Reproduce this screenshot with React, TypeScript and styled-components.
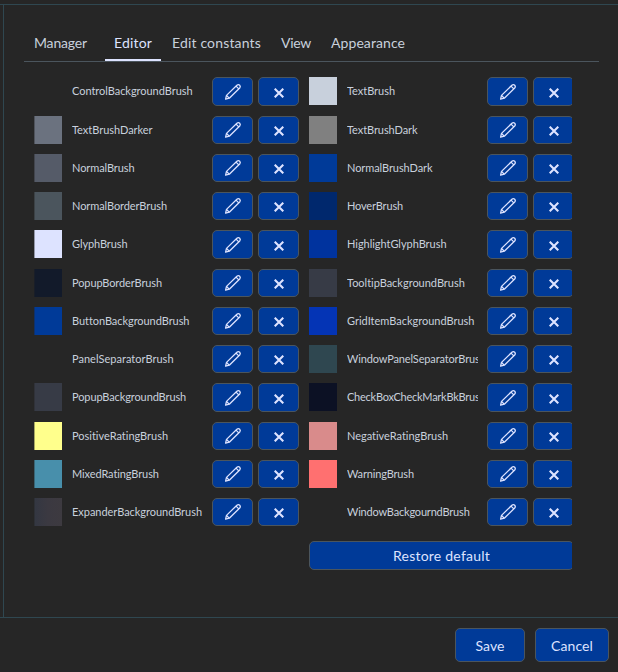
import React from 'react';
import styled, { createGlobalStyle } from 'styled-components';

const color = {
  page: '#262626',
  separator: '#2f4750',
  border: '#4b555d',
  text: '#c8d0dc',
  bright: '#dde3ff',
  button: '#003a98',
};

const GlobalStyle = createGlobalStyle`
  * { box-sizing: border-box; }
  body {
    margin: 0;
    background: ${color.page};
    color: ${color.text};
    font-family: Lato, "Open Sans", sans-serif;
    overflow: hidden;
  }
`;

const Window = styled.div`
  display: flex;
  flex-direction: column;
  width: 618px;
  height: 672px;
  padding-top: 4px;
`;

const Content = styled.main`
  flex: 1;
  margin-left: 3px;
  border-left: 1px solid ${color.separator};
  padding: 24px 19px 0 20px;
`;

const ContentFrame = styled.div`
  display: flex;
  height: 614px;
  border-top: 1px solid ${color.separator};
  border-bottom: 1px solid ${color.separator};
`;

const TabBar = styled.nav`
  display: flex;
  height: 33px;
  border-bottom: 1px solid ${color.border};
`;

const Tab = styled.button<{ $width: number; $spacing: number; $inset?: number; $active?: boolean }>`
  width: ${(p) => p.$width}px;
  height: 32px;
  padding: 0 0 3px ${(p) => p.$inset ?? 10}px;
  border: 0;
  border-bottom: 2px solid ${(p) => (p.$active ? color.bright : 'transparent')};
  background: none;
  color: ${(p) => (p.$active ? color.bright : color.text)};
  font: 14px/27px Lato, sans-serif;
  letter-spacing: ${(p) => p.$spacing}px;
  text-align: left;
  white-space: nowrap;
`;

const BrushGrid = styled.div`
  display: grid;
  grid-template-columns: 265px 263px;
  grid-template-rows: 39px 38px 38px 38px 39px 38px 38px 38px 39px 38px 38px 38px;
  column-gap: 10px;
  width: 538px;
  margin: 15px 0 0 10px;
`;

const BrushRow = styled.div`
  display: flex;
  align-items: flex-start;
  overflow: hidden;
`;

const Swatch = styled.div<{ $fill: string; $soft: boolean }>`
  flex: none;
  width: 28px;
  height: 28px;
  background: ${(p) => p.$fill};
  box-shadow: ${(p) => (p.$soft ? 'inset 1px 0 rgba(38, 38, 38, 0.4)' : 'none')};
`;

const BrushName = styled.span<{ $spacing: number }>`
  flex: none;
  width: 130.5px;
  margin: 0 9.5px 0 10px;
  overflow: hidden;
  font-size: 11px;
  line-height: 28px;
  letter-spacing: ${(p) => p.$spacing}px;
  white-space: nowrap;
`;

const Button = styled.button`
  display: flex;
  align-items: center;
  justify-content: center;
  padding: 0;
  border: 1px solid ${color.border};
  border-radius: 5px;
  background: ${color.button};
  color: ${color.bright};
  font: 14px Lato, sans-serif;
`;

const IconButton = styled(Button)<{ $tall: boolean }>`
  flex: none;
  width: 41px;
  height: ${(p) => (p.$tall ? 29 : 28)}px;
  margin-right: 5px;
`;

const RestoreSlot = styled.div`
  width: 263px;
  margin: 5px 0 0 285px;
  overflow: hidden;
`;

const RestoreButton = styled(Button)`
  width: 265px;
  height: 29px;
  letter-spacing: 0.23px;
`;

const Footer = styled.footer`
  display: flex;
  justify-content: flex-end;
  gap: 10px;
  padding: 10px 9px 0 0;
`;

const FooterButton = styled(Button)<{ $width: number }>`
  width: ${(p) => p.$width}px;
  height: 34px;
  letter-spacing: 0.1px;
`;

const PencilIcon = () => (
  <svg width="18" height="18" viewBox="0 0 18 18" fill="none" stroke="currentColor" strokeWidth="1.3" strokeLinejoin="round">
    <path d="M1.6 16.1 2.5 12.4 12.9 2.2Q14.4 1 15.7 2.2 16.9 3.5 15.7 5L5.3 15.2Z" />
    <path d="M2.5 12.4 5.3 15.2M12 3.1 14.8 5.9" />
  </svg>
);

const CrossIcon = () => (
  <svg width="10" height="10" viewBox="0 0 10 10" stroke="currentColor" strokeWidth="2.1" transform="translate(0 1)">
    <path d="M.7.7 9.3 9.3M9.3.7.7 9.3" />
  </svg>
);

interface Brush {
  name: string;
  fill: string;
  spacing: number;
}

const none = 'transparent';

const brushes: Brush[] = [
  { name: 'ControlBackgroundBrush', fill: none, spacing: -0.04 },
  { name: 'TextBrush', fill: '#c8d0dc', spacing: -0.04 },
  { name: 'TextBrushDarker', fill: '#6b727f', spacing: -0.03 },
  { name: 'TextBrushDark', fill: '#808080', spacing: -0.08 },
  { name: 'NormalBrush', fill: '#555b68', spacing: -0.09 },
  { name: 'NormalBrushDark', fill: '#003a98', spacing: -0.08 },
  { name: 'NormalBorderBrush', fill: '#4b555d', spacing: -0.09 },
  { name: 'HoverBrush', fill: '#00286d', spacing: -0.16 },
  { name: 'GlyphBrush', fill: '#dde3ff', spacing: -0.1 },
  { name: 'HighlightGlyphBrush', fill: '#00339e', spacing: -0.04 },
  { name: 'PopupBorderBrush', fill: '#121a2a', spacing: -0.11 },
  { name: 'TooltipBackgroundBrush', fill: '#373b46', spacing: -0.02 },
  { name: 'ButtonBackgroundBrush', fill: '#003a98', spacing: -0.06 },
  { name: 'GridItemBackgroundBrush', fill: '#0434b5', spacing: -0.01 },
  { name: 'PanelSeparatorBrush', fill: none, spacing: 0.02 },
  { name: 'WindowPanelSeparatorBrush', fill: '#2f4750', spacing: -0.14 },
  { name: 'PopupBackgroundBrush', fill: '#373b46', spacing: -0.11 },
  { name: 'CheckBoxCheckMarkBkBrush', fill: '#0c1124', spacing: -0.25 },
  { name: 'PositiveRatingBrush', fill: '#ffff8c', spacing: -0.01 },
  { name: 'NegativeRatingBrush', fill: '#d98b8b', spacing: -0.02 },
  { name: 'MixedRatingBrush', fill: '#488fab', spacing: -0.1 },
  { name: 'WarningBrush', fill: '#ff7070', spacing: -0.16 },
  { name: 'ExpanderBackgroundBrush', fill: 'linear-gradient(90deg, #333742, #3b3941 50%, #3d3a40)', spacing: -0.04 },
  { name: 'WindowBackgourndBrush', fill: none, spacing: -0.19 },
];

// Rows whose edges round to one extra pixel.
const tallRows = [0, 4, 8];

export default function App() {
  return (
    <Window>
      <GlobalStyle />
      <ContentFrame>
        <Content>
          <TabBar>
            <Tab $width={81} $spacing={-0.17}>Manager</Tab>
            <Tab $width={56} $spacing={0.17} $inset={9} $active>Editor</Tab>
            <Tab $width={109} $spacing={0.16} $inset={11}>Edit constants</Tab>
            <Tab $width={50} $spacing={-0.29} $inset={11}>View</Tab>
            <Tab $width={94} $spacing={0.08} $inset={11}>Appearance</Tab>
          </TabBar>
          <BrushGrid>
            {brushes.map((brush, i) => {
              const tall = tallRows.includes(Math.floor(i / 2));
              return (
                <BrushRow key={brush.name}>
                  <Swatch $fill={brush.fill} $soft={i % 2 === 0 && brush.fill !== none} />
                  <BrushName $spacing={brush.spacing}>{brush.name}</BrushName>
                  <IconButton $tall={tall} aria-label="Edit"><PencilIcon /></IconButton>
                  <IconButton $tall={tall} aria-label="Clear"><CrossIcon /></IconButton>
                </BrushRow>
              );
            })}
          </BrushGrid>
          <RestoreSlot>
            <RestoreButton>Restore default</RestoreButton>
          </RestoreSlot>
        </Content>
      </ContentFrame>
      <Footer>
        <FooterButton $width={70}>Save</FooterButton>
        <FooterButton $width={74}>Cancel</FooterButton>
      </Footer>
    </Window>
  );
}
